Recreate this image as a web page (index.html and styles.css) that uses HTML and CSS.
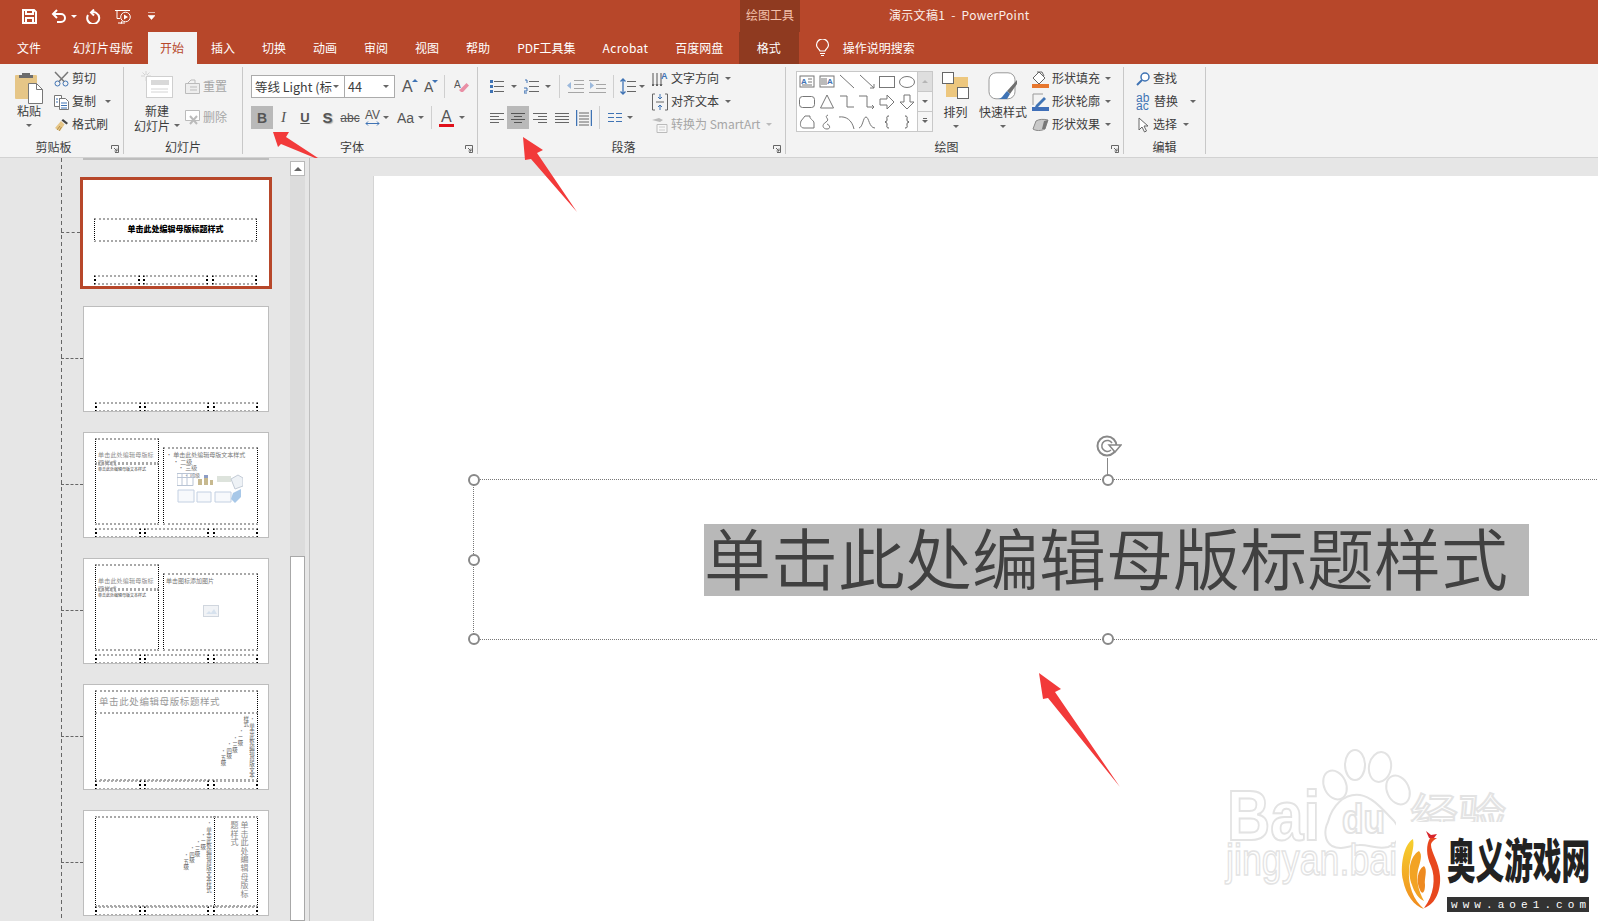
FILE: index.html
```html
<!DOCTYPE html>
<html lang="zh-CN">
<head>
<meta charset="utf-8">
<title>演示文稿1 - PowerPoint</title>
<link rel="stylesheet" href="styles.css">
</head>
<body>
<svg class="defs" width="0" height="0">
  <symbol id="launcher" viewBox="0 0 8 8"><path d="M.5 4V.5h7v7H4M3 3l3 3M6 3.500V6H3.500" fill="none" stroke="#666"/></symbol>
  <symbol id="a-left" viewBox="0 0 14 12"><path d="M0 1.500h14M0 4.500h9M0 7.500h14M0 10.500h9" fill="none" stroke="#666"/></symbol>
  <symbol id="a-center" viewBox="0 0 14 12"><path d="M0 1.500h14M3 4.500h8M0 7.500h14M3 10.500h8" fill="none" stroke="#555"/></symbol>
  <symbol id="a-right" viewBox="0 0 14 12"><path d="M0 1.500h14M5 4.500h9M0 7.500h14M5 10.500h9" fill="none" stroke="#666"/></symbol>
  <symbol id="a-just" viewBox="0 0 14 12"><path d="M0 1.500h14M0 4.500h14M0 7.500h14M0 10.500h14" fill="none" stroke="#666"/></symbol>
</svg>

<header class="titlebar">
  <div class="qat">
    <svg class="q-save" width="15" height="15" viewBox="0 0 15 15"><path d="M1 1h11l2 2v11H1zM4 1v4h7V1M4 14V9h7v5" fill="none" stroke="#fff" stroke-width="2"/></svg>
    <svg class="q-undo" width="16" height="14" viewBox="0 0 16 14"><path d="M2 5h8a3.600 3.600 0 0 1 0 8H6M6 1 2 5l4 4" fill="none" stroke="#fff" stroke-width="2"/></svg>
    <i class="caret white"></i>
    <svg class="q-redo" width="15" height="15" viewBox="0 0 15 15"><path d="M5 3.500a6 6 0 1 1-3 2.600M8 .5 5 3.500l3 3" fill="none" stroke="#fff" stroke-width="2"/></svg>
    <svg class="q-show" width="17" height="17" viewBox="0 0 17 17"><path d="M0 1.500h15M2 1.500v8h3M3 14h7" fill="none" stroke="#fff"/><circle cx="10.500" cy="8" r="4.800" fill="none" stroke="#fff"/><path d="M9 5.500l4 2.500-4 2.500z" fill="#fff"/><path d="M6 15l1-3" stroke="#fff"/></svg>
    <svg class="q-more" width="7" height="8" viewBox="0 0 7 8"><path d="M0 .5h7M0 3.500h7L3.500 7.500z" fill="#fff" stroke="#fff" stroke-width=".6"/></svg>
  </div>
  <div class="ctx-head">绘图工具</div>
  <div class="doc-title">演示文稿1&nbsp; - &nbsp;PowerPoint</div>
</header>

<nav class="tabs">
  <a class="tab first">文件</a><a class="tab">幻灯片母版</a><a class="tab on">开始</a><a class="tab">插入</a><a class="tab">切换</a><a class="tab">动画</a><a class="tab">审阅</a><a class="tab">视图</a><a class="tab">帮助</a><a class="tab">PDF工具集</a><a class="tab wide">Acrobat</a><a class="tab">百度网盘</a><a class="tab ctx">格式</a>
  <svg class="bulb" width="15" height="18" viewBox="0 0 15 18"><path d="M5 12C4 9.500 1.500 9 1.500 6a6 6 0 0 1 12 0c0 3-2.500 3.500-3.500 6zM5 14.500h5M6 16.500h3" fill="none" stroke="#fff" stroke-width="1.200"/></svg>
  <a class="search">操作说明搜索</a>
</nav>

<section class="ribbon">
  <!-- 剪贴板 -->
  <div class="group g1">
    <div class="body">
      <div class="big paste">
        <svg width="30" height="33" viewBox="0 0 30 33"><rect x="1" y="4" width="22" height="24" rx="1" fill="#e6c687"/><path d="M8 4V2h8v2h3v3H5V4z" fill="#6d6d6d"/><path d="M14.500 12.500h8l6 6v14h-14z" fill="#fff" stroke="#777"/><path d="M22.500 12.500v6h6" fill="none" stroke="#777"/></svg>
        <span>粘贴</span><i class="caret lone"></i>
      </div>
      <div class="col">
        <div class="row"><svg class="ri" width="15" height="16" viewBox="0 0 15 16"><circle cx="3.500" cy="12.500" r="2.500" fill="none" stroke="#3f73b4"/><circle cx="11.500" cy="12.500" r="2.500" fill="none" stroke="#3f73b4"/><path d="M1 1l9 9.500M14 1 5 10.500" stroke="#777" stroke-width="1.500"/></svg>剪切</div>
        <div class="row"><svg class="ri" width="15" height="16" viewBox="0 0 15 16"><path d="M.5 1.500h7v3h-2v8h-5zM5.500 4.500h6l3 3v8h-9z" fill="#fff" stroke="#777"/><path d="M2 5h2M2 8h2M7 9h6M7 11.500h6M7 14h6" stroke="#3f73b4"/></svg>复制<i class="caret m9"></i></div>
        <div class="row"><svg class="ri" width="15" height="16" viewBox="0 0 15 16"><path d="M9 2l5 4-1.500 1.500-5-4z" fill="#444"/><path d="M7 4l3.500 3.500L6 14 1 11z" fill="#e6c687"/><path d="M3 13l3-4M5 14l2.500-4" stroke="#b58f4a"/></svg>格式刷</div>
      </div>
    </div>
    <div class="label launch">剪贴板<svg class="lnch" width="8" height="8"><use href="#launcher"/></svg></div>
  </div>

  <!-- 幻灯片 -->
  <div class="group g2">
    <div class="body">
      <div class="big newslide">
        <svg width="32" height="27" viewBox="0 0 32 27"><rect x="5.500" y="5.500" width="26" height="21" fill="#fff" stroke="#cfcfcf"/><rect x="10" y="9" width="18" height="5" fill="#d9d9d9"/><path d="M10 18h17M10 21h17" stroke="#d4d4d4"/><path d="M5 0v4M0 5h4M5 6v4M6 5h4M1.500 1.500 4 4M8.500 1.500 6 4" stroke="#d4d4d4"/></svg>
        <span>新建</span><span class="cap-row">幻灯片<i class="caret m4"></i></span>
      </div>
      <div class="col spaced dim">
        <div class="row"><svg class="ri" width="15" height="15" viewBox="0 0 15 15"><path d="M.5 4.500h14v10H.5z" fill="#eee" stroke="#bbb"/><path d="M3 4l3-3h4v3M5 8h7M5 11h7" fill="none" stroke="#bbb"/></svg>重置</div>
        <div class="row"><svg class="ri" width="15" height="15" viewBox="0 0 15 15"><path d="M.5.500h14v10H.5z" fill="#fff" stroke="#bbb"/><path d="M5 6l7 8M12 6l-7 8" stroke="#bbb" stroke-width="2"/></svg>删除</div>
      </div>
    </div>
    <div class="label">幻灯片</div>
  </div>

  <!-- 字体 -->
  <div class="group g3">
    <div class="body stack">
      <div class="tight">
        <div class="field f-font"><span>等线 Light (标</span><i class="caret"></i></div>
        <div class="field f-size"><span>44</span><i class="caret"></i></div>
        <span class="grow">A<i class="tri up"></i></span>
        <span class="grow small">A<i class="tri down"></i></span>
        <i class="vsep s-font"></i>
        <svg class="eraser" width="15" height="16" viewBox="0 0 15 16"><path d="M6.500 10l6-6 2.500 2.500-6 6.500H7L5 11z" fill="#e98fa5"/><text x="0" y="9" class="tiny">A</text></svg>
      </div>
      <div class="tight">
        <b class="fb fb-b on-box">B</b><i class="fb fb-i">I</i><u class="fb fb-u">U</u><b class="fb fb-s">S</b><s class="fb fb-abc">abc</s>
        <span class="fb fb-av"><span class="av">AV<svg width="15" height="5" viewBox="0 0 15 5"><path d="M1 2.500h13M3 .5l-2 2 2 2M12 .5l2 2-2 2" fill="none" stroke="#3f73b4"/></svg></span><i class="caret"></i></span>
        <span class="fb fb-aa">Aa<i class="caret"></i></span>
        <i class="vsep s-color"></i>
        <span class="fb fb-color"><span class="colorA">A</span><i class="caret"></i></span>
      </div>
    </div>
    <div class="label launch">字体<svg class="lnch" width="8" height="8"><use href="#launcher"/></svg></div>
  </div>

  <!-- 段落 -->
  <div class="group g4">
    <div class="body">
      <div class="stack para">
        <div class="tight">
          <svg width="15" height="15" viewBox="0 0 15 15"><path d="M5 2.500h10M5 7.500h10M5 12.500h10" stroke="#666"/><path d="M1 1h3v3H1zM1 6h3v3H1zM1 11h3v3H1z" fill="#3f73b4"/></svg><i class="caret m7"></i>
          <svg class="m7" width="15" height="15" viewBox="0 0 15 15"><path d="M5 2.500h10M5 7.500h10M5 12.500h10" stroke="#666"/><path d="M1 1h2v3M0 9h3v3H0v2h3" fill="none" stroke="#3f73b4"/></svg><i class="caret m6"></i>
          <i class="vsep m8"></i>
          <svg class="m7 faint" width="17" height="13" viewBox="0 0 17 13"><path d="M7 .5h10M7 4.500h10M7 8.500h10M1 12.500h16" stroke="#999"/><path d="M0 5.500 4 2v7z" fill="#8eb0d8"/></svg>
          <svg class="m5 faint" width="17" height="13" viewBox="0 0 17 13"><path d="M0 .5h10M7 4.500h10M7 8.500h10M0 12.500h17" stroke="#999"/><path d="M5 5.500 1 2v7z" fill="#8eb0d8"/></svg>
          <i class="vsep m7"></i>
          <svg class="m6" width="16" height="17" viewBox="0 0 16 17"><path d="M7 3.500h9M7 8.500h9M7 13.500h9" stroke="#666"/><path d="M3 1v15M.5 3.500 3 1l2.500 2.500M.5 13.500 3 16l2.500-2.500" fill="none" stroke="#3f73b4" stroke-width="1.300"/></svg><i class="caret m3"></i>
        </div>
        <div class="tight">
          <span class="al first-al"><svg width="14" height="12"><use href="#a-left"/></svg></span>
          <span class="al al-on"><svg width="14" height="12"><use href="#a-center"/></svg></span>
          <span class="al"><svg width="14" height="12"><use href="#a-right"/></svg></span>
          <span class="al m8"><svg width="14" height="12"><use href="#a-just"/></svg></span>
          <svg class="m7" width="16" height="16" viewBox="0 0 16 16"><path d="M.5 0v16M15.500 0v16" stroke="#3f73b4" stroke-width="1.500"/><path d="M3 3h10M3 6h10M3 9h10M3 12h10M3 15h10" stroke="#666"/></svg>
          <i class="vsep m7"></i>
          <svg class="m8" width="14" height="12" viewBox="0 0 14 12"><path d="M0 1.500h6M8 1.500h6M0 5.500h6M8 5.500h6M0 9.500h6M8 9.500h6" stroke="#3f73b4" stroke-width="1.200"/></svg><i class="caret m5"></i>
        </div>
      </div>
      <div class="col textcol">
        <div class="row"><svg class="ri tall" width="16" height="18" viewBox="0 0 16 18"><path d="M1 3v13M5 3v13M9 3v13" stroke="#555"/><text x="9" y="9" class="blueA">A</text><path d="M0 14l1 2 1-2M4 14l1 2 1-2M8 14l1 2 1-2" fill="none" stroke="#555"/></svg>文字方向<i class="caret m6"></i></div>
        <div class="row"><svg class="ri tall" width="16" height="18" viewBox="0 0 16 18"><path d="M3 1H.5v16H3M13 1h2.500v16H13" fill="none" stroke="#666"/><path d="M4 9h8" stroke="#666"/><path d="M8 1v5M6 4l2 2 2-2M8 17v-5M6 14l2-2 2 2" fill="none" stroke="#3f73b4"/></svg>对齐文本<i class="caret m6"></i></div>
        <div class="row dim"><svg class="ri tall" width="16" height="18" viewBox="0 0 16 18"><path d="M0 4l7-2 4 2-3 2z" fill="#bbb"/><path d="M5 8.500h10v8H5z" fill="#f7f7f7" stroke="#bbb"/><path d="M7 11h6M7 14h6" stroke="#ccc"/></svg>转换为 SmartArt<i class="caret m6 pale"></i></div>
      </div>
    </div>
    <div class="label launch">段落<svg class="lnch" width="8" height="8"><use href="#launcher"/></svg></div>
  </div>

  <!-- 绘图 -->
  <div class="group g5">
    <div class="body">
      <div class="gallery">
        <div class="shapes">
          <svg viewBox="0 0 20 20"><rect x="3" y="4" width="14" height="11" fill="#fff" stroke="#777"/><text x="4" y="12" class="tinyblue">A</text><path d="M11 7h4M11 10h4M5 13h10" stroke="#777"/></svg>
          <svg viewBox="0 0 20 20"><rect x="3" y="4" width="14" height="11" fill="#fff" stroke="#777"/><path d="M5 6v7M7 6v7M9 6v7" stroke="#777"/><text x="10" y="12" class="tinyblue">A</text></svg>
          <svg viewBox="0 0 20 20"><path d="M3 3l14 13" stroke="#777"/></svg>
          <svg viewBox="0 0 20 20"><path d="M3 3l14 13M17 12v4h-4" fill="none" stroke="#777"/></svg>
          <svg viewBox="0 0 20 20"><rect x="2.500" y="4.500" width="15" height="11" fill="none" stroke="#777"/></svg>
          <svg viewBox="0 0 20 20"><ellipse cx="10" cy="10" rx="7.500" ry="5.500" fill="none" stroke="#777"/></svg>
          <svg viewBox="0 0 20 20"><rect x="2.500" y="4.500" width="15" height="11" rx="3" fill="none" stroke="#777"/></svg>
          <svg viewBox="0 0 20 20"><path d="M10 3l6.500 13h-13z" fill="none" stroke="#777"/></svg>
          <svg viewBox="0 0 20 20"><path d="M3 4h7v11h7" fill="none" stroke="#777"/></svg>
          <svg viewBox="0 0 20 20"><path d="M2 4h8v11h7M15 13l2 2-2 2" fill="none" stroke="#777"/></svg>
          <svg viewBox="0 0 20 20"><path d="M3 7h7V3l7 7-7 7v-4H3z" fill="none" stroke="#777"/></svg>
          <svg viewBox="0 0 20 20"><path d="M7 3h6v7h4l-7 7-7-7h4z" fill="none" stroke="#777"/></svg>
          <svg viewBox="0 0 20 20"><path d="M4 9l4-5h5c-1 3 4 4 4 7v5H7C3 16 3 12 4 9z" fill="none" stroke="#777"/></svg>
          <svg viewBox="0 0 20 20"><path d="M11 3C6 5 14 7 9 10S6 17 10 17s3-4 0-5" fill="none" stroke="#777"/></svg>
          <svg viewBox="0 0 20 20"><path d="M2 5c7-1 13 3 15 12" fill="none" stroke="#777"/></svg>
          <svg viewBox="0 0 20 20"><path d="M2 16C6 15 6 5 9 5s3 11 9 11" fill="none" stroke="#777"/></svg>
          <svg viewBox="0 0 20 20"><path d="M12 4c-3 0-2 2-2 3s0 3-2 3c2 0 2 2 2 3s-1 3 2 3" fill="none" stroke="#555"/></svg>
          <svg viewBox="0 0 20 20"><path d="M8 4c3 0 2 2 2 3s0 3 2 3c-2 0-2 2-2 3s1 3-2 3" fill="none" stroke="#555"/></svg>
        </div>
        <div class="g-scroll">
          <span class="gs off"><i class="tri up grey"></i></span>
          <span class="gs"><i class="caret"></i></span>
          <span class="gs more"><i class="caret"></i></span>
        </div>
      </div>
      <div class="big arrange">
        <svg width="27" height="27" viewBox="0 0 27 27"><rect x="10" y="5" width="16" height="10" fill="#edc77e"/><rect x="4" y="12" width="13" height="13" fill="#edc77e"/><rect x=".5" y=".5" width="11" height="11" fill="#fff" stroke="#666"/><rect x="15.500" y="15.500" width="11" height="11" fill="#fff" stroke="#666"/></svg>
        <span>排列</span><i class="caret lone"></i>
      </div>
      <div class="big quick">
        <svg width="30" height="28" viewBox="0 0 30 28"><rect x="1" y=".8" width="26" height="26" rx="7" fill="#fff" stroke="#999"/><path d="M29 8 19 19l3 3 7-10z" fill="#6f6f6f"/><path d="M10 27c4 0 5-4 9-8l3 3-3 5z" fill="#3f73b4"/></svg>
        <span>快速样式</span><i class="caret lone"></i>
      </div>
      <div class="col shapecol">
        <div class="row"><svg class="ri tall" width="17" height="18" viewBox="0 0 17 18"><path d="M7 2 1 8l6 6 6-6z" fill="#fff" stroke="#666"/><path d="M5 2h5l2 4" fill="none" stroke="#666"/><rect y="14" width="17" height="4" fill="#e7772e"/></svg>形状填充<i class="caret m5"></i></div>
        <div class="row"><svg class="ri tall" width="17" height="18" viewBox="0 0 17 18"><path d="M1 12V1h10" fill="none" stroke="#999"/><path d="M4 12l8-8 2 2-8 8H3z" fill="#3f73b4"/><rect y="14" width="17" height="4" fill="#3f6fb8"/></svg>形状轮廓<i class="caret m5"></i></div>
        <div class="row"><svg class="ri tall" width="17" height="18" viewBox="0 0 17 18"><path d="M1 13 4 5c3-2 8-2 12-1l-3 9c-4 2-9 2-12 0z" fill="#c9c9c9" stroke="#888"/><path d="M13 13l3-9-4 1-2 8z" fill="#777"/></svg>形状效果<i class="caret m5"></i></div>
      </div>
    </div>
    <div class="label launch">绘图<svg class="lnch" width="8" height="8"><use href="#launcher"/></svg></div>
  </div>

  <!-- 编辑 -->
  <div class="group g6">
    <div class="body">
      <div class="col">
        <div class="row"><svg class="ri" width="14" height="14" viewBox="0 0 14 14"><circle cx="9" cy="5" r="4" fill="#fff" stroke="#3f73b4" stroke-width="1.500"/><path d="M6 8l-5 5" stroke="#3f73b4" stroke-width="2"/></svg>查找</div>
        <div class="row"><span class="abac ri">ab<br>ac</span>替换<i class="caret m12"></i></div>
        <div class="row"><svg class="ri" width="14" height="16" viewBox="0 0 14 16"><path d="M3 1v12l3-3 2.500 5 2-1-2.500-5h4z" fill="#fff" stroke="#666"/></svg>选择<i class="caret m6"></i></div>
      </div>
    </div>
    <div class="label">编辑</div>
  </div>
</section>

<main class="workspace">
  <aside class="pane">
    <div class="tree">
      <div class="prev"></div>

      <div class="t-row"><div class="thumb sel">
        <div class="ph t-title"><b>单击此处编辑母版标题样式</b></div>
        <div class="ph f1"></div><div class="ph f2"></div><div class="ph f3"></div>
      </div></div>

      <div class="t-row"><div class="thumb">
        <div class="ph f1"></div><div class="ph f2"></div><div class="ph f3"></div>
      </div></div>

      <div class="t-row"><div class="thumb">
        <div class="ph s-title">单击此处编辑母版标题样式</div>
        <div class="ph s-text"><p>单击此处编辑母版文本样式</p></div>
        <div class="ph s-right">
          <p>• 单击此处编辑母版文本样式</p><p class="l2">• 二级</p><p class="l3">• 三级</p><p class="l4">• 四级</p>
          <svg class="content-icons" width="66" height="32" viewBox="0 0 66 32">
            <path d="M0 .5h16v12H0zM0 4.500h16M5 .5v12M10 .5v12" fill="none" stroke="#b9c4d4"/>
            <path d="M21 12V6h4v6zM27 12V2h4v10zM33 12V7h3v5z" fill="#c7b98f"/><path d="M27 5h4V2h-4z" fill="#8c9cc4"/>
            <path d="M40 3h14v6H40z" fill="#dde3dc"/>
            <path d="M54 6l7-4 5 3v8l-8 3z" fill="#eef2f6" stroke="#c3cbd6"/>
            <path d="M1 17h16v12H1zM20 19h14v10H20zM38 19h16v10H38z" fill="#f7f9fc" stroke="#c3d0e2"/>
            <path d="M56 20l8-4v8l-6 6-4-4z" fill="#a8c8e8"/>
          </svg>
        </div>
        <div class="ph f1"></div><div class="ph f2"></div><div class="ph f3"></div>
      </div></div>

      <div class="t-row"><div class="thumb">
        <div class="ph s-title">单击此处编辑母版标题样式</div>
        <div class="ph s-text"><p>单击此处编辑母版文本样式</p></div>
        <div class="ph s-right">
          <p>单击图标添加图片</p>
          <svg class="pic-icon" width="16" height="12" viewBox="0 0 16 12"><rect x=".5" y=".5" width="15" height="11" fill="#f1f3f6" stroke="#d0d6de"/><path d="M3 9l3-3 2 2 3-4 3 5z" fill="#d7e2ee"/></svg>
        </div>
        <div class="ph f1"></div><div class="ph f2"></div><div class="ph f3"></div>
      </div></div>

      <div class="t-row"><div class="thumb">
        <div class="ph v-title">单击此处编辑母版标题样式</div>
        <div class="ph v-body vert">
          <p>• 单击此处编辑母版文本样式</p><p>• 二级</p><p>• 三级</p><p>• 四级</p><p>• 五级</p>
        </div>
        <div class="ph f1"></div><div class="ph f2"></div><div class="ph f3"></div>
      </div></div>

      <div class="t-row"><div class="thumb">
        <div class="ph w-body vert">
          <p>• 单击此处编辑母版文本样式</p><p>• 二级</p><p>• 三级</p><p>• 四级</p><p>• 五级</p>
        </div>
        <div class="ph w-title">单击此处编辑母版标题样式</div>
        <div class="ph f1"></div><div class="ph f2"></div><div class="ph f3"></div>
      </div></div>
    </div>

    <div class="scrollbar">
      <div class="sb-up"><i class="tri up dark"></i></div>
      <div class="sb-track"></div>
      <div class="sb-thumb"></div>
    </div>
  </aside>

  <div class="canvas">
    <div class="slide">
      <div class="placeholder">
        <span class="selected-text">单击此处编辑母版标题样式</span>
        <i class="handle h-tl"></i><i class="handle h-tc"></i><i class="handle h-ml"></i><i class="handle h-bl"></i><i class="handle h-bc"></i>
        <i class="rot-line"></i>
        <svg class="rot" width="26" height="24" viewBox="0 0 26 24"><circle cx="11" cy="12" r="9.500" fill="none" stroke="#888" stroke-width="2"/><path d="M15 16a5.500 5.500 0 1 1 1-7" fill="none" stroke="#888" stroke-width="1.500"/><path d="M13 11h12l-6 7z" fill="#fff" stroke="#888" stroke-width="1.500"/></svg>
      </div>

      <svg class="watermark" width="383" height="191" viewBox="1215 730 383 191">
        <g class="wm-outline">
          <ellipse cx="1335" cy="785" rx="11" ry="15" transform="rotate(-25 1335 785)"/>
          <ellipse cx="1355" cy="765" rx="10" ry="15"/>
          <ellipse cx="1380" cy="767" rx="11" ry="15" transform="rotate(10 1380 767)"/>
          <ellipse cx="1398" cy="790" rx="11" ry="15" transform="rotate(-25 1398 790)"/>
          <path d="M1328 822c4-16 16-29 32-27 13 2 23 15 34 26 8 10 7 21-6 26-12 3-20-3-29-2-9 0-17 6-27 1-8-5-8-16-4-24z"/>
          <text x="1227" y="840" textLength="93" lengthAdjust="spacingAndGlyphs" class="wm-big">Bai</text>
          <text x="1342" y="833" textLength="43" lengthAdjust="spacingAndGlyphs" class="wm-du">du</text>
          <text x="1410" y="832" textLength="96" lengthAdjust="spacingAndGlyphs" class="wm-cn">经验</text>
          <text x="1226" y="875" textLength="211" lengthAdjust="spacingAndGlyphs" class="wm-url">jingyan.baidu</text>
        </g>
        <rect x="1396" y="822" width="202" height="99" fill="#fff"/>
        <defs><linearGradient id="ph" x1="0" y1="0" x2="0" y2="1"><stop offset="0" stop-color="#f6d02e"/><stop offset="1" stop-color="#f08a1e"/></linearGradient></defs>
        <path d="M1413 839c-10 6-13 29-10 41 3 15 11 26 21 29-11-9-16-24-15-39 1-13 6-22 4-31z" fill="url(#ph)"/>
        <path d="M1419 851c-9 5-12 21-7 34 2 7 7 14 12 16-6-11-8-21-6-31 2-8 5-15 1-19z" fill="#f2a324"/>
        <path d="M1424 866c-7 4-8 16-4 24 2 5 5 3 5-5-1-7 3-15-1-19z" fill="#ee8a20"/>
        <path d="M1430 838c-4 7-4 17 1 28 5 12 3 29-7 42 12-4 17-18 16-32-1-14-9-24-9-31 0-3 3-5 6-7z" fill="#e8481e"/>
        <path d="M1426 831l5 4 6-1-3 4h-5z" fill="#d8262c"/>
        <text transform="translate(1447 878) scale(1 1.620)" textLength="143" lengthAdjust="spacingAndGlyphs" class="logo-cn">奥义游戏网</text>
        <rect x="1447" y="897" width="142" height="15" fill="#333"/>
        <text x="1451" y="908" textLength="135" class="logo-url">www.aoe1.com</text>
      </svg>
    </div>
  </div>
</main>

<svg class="arrows" width="1598" height="921" viewBox="0 0 1598 921">
  <path d="M273 132l16 0-3 5 32 21h-3l-34-14-3 3z" fill="#f23a3a"/>
  <path d="M523 137l20 13-6 3 40 59-46-53-6 1z" fill="#f23a3a"/>
  <path d="M1039 673l22 16-6 3 65 95-72-89-5 1z" fill="#f23a3a"/>
</svg>
</body>
</html>
```

FILE: styles.css
```css
* { box-sizing: border-box; }
html, body { margin: 0; height: 100%; }
body {
  width: 1598px; height: 921px; overflow: hidden; position: relative;
  font: 12px/1.2 "Noto Sans CJK SC", "Noto Sans", sans-serif;
  color: #3c3c3c; background: #e6e6e6;
  display: flex; flex-direction: column;
}
.defs { position: absolute; }
p { margin: 0; }
svg { flex: none; display: block; }

/* title bar */
.titlebar { height: 32px; background: #b7472a; display: flex; color: #fff; flex: none; }
.qat { display: flex; align-items: center; width: 740px; padding-left: 22px; }
.q-save { margin-top: 1px; }
.q-undo { margin-left: 14px; }
.qat .caret { margin-left: 4px; }
.q-redo { margin-left: 9px; }
.q-show { margin-left: 14px; margin-top: 2px; }
.q-more { margin-left: 16px; }
.ctx-head { width: 60px; background: #8f3a20; color: #f3c2ad; text-align: center; line-height: 29px; }
.doc-title { margin-left: 89px; line-height: 29px; color: #fbeee9; letter-spacing: .3px; }

/* tabs */
.tabs { height: 32px; background: #b7472a; display: flex; align-items: stretch; padding-left: 4.500px; gap: 2px; flex: none; }
.tab { padding: 0 12.500px; color: #fff; line-height: 31px; }
.tab.first { margin-right: 5px; }
.tab.wide { letter-spacing: .3px; }
.tab.on { background: #f3f3f3; color: #b7472a; width: 49px; padding: 0; text-align: center; }
.tab.ctx { background: #8f3a20; width: 60px; padding: 0; text-align: center; margin-left: 1px; }
.bulb { align-self: center; margin-left: 14px; margin-top: -1px; }
.search { color: #fff; line-height: 31px; margin-left: 11px; }

/* ribbon */
.ribbon { height: 94px; flex: none; background: #f3f3f3; border-bottom: 1px solid #d2d2d2; display: flex; padding-top: 3px; align-items: flex-start; }
.group { height: 87px; border-right: 1px solid #c8c8c8; position: relative; display: flex; flex-direction: column; }
.g1 { width: 124px; } .g2 { width: 119px; } .g3 { width: 235px; }
.g4 { width: 308px; } .g5 { width: 338px; } .g6 { width: 82px; }
.body { height: 73px; display: flex; flex: none; }
.label { height: 14px; line-height: 14px; text-align: center; }
.label.launch { padding-right: 16px; }
.lnch { position: absolute; right: 4px; bottom: 1px; }

.big { display: flex; flex-direction: column; align-items: center; line-height: 15px; }
.big .lone { margin-top: 6px; }
.paste { width: 46px; margin-left: 6px; padding-top: 4px; }
.paste span { margin-top: -1px; }
.g1 .col { margin-left: 2px; }
.col { display: flex; flex-direction: column; }
.row { height: 23px; display: flex; align-items: center; white-space: nowrap; }
.ri { margin-right: 3px; }
.newslide { width: 56px; margin-left: 5px; padding-top: 4px; }
.newslide svg { margin-bottom: 5px; }
.cap-row { display: flex; align-items: center; }
.col.spaced { padding-top: 8px; gap: 8px; }
.dim { color: #a6a6a6; }

/* small icon caret */
.caret { width: 0; height: 0; border: 3px solid transparent; border-top-color: #666; border-bottom: 0; display: inline-block; flex: none; }
.caret.white { border-top-color: #fff; }
.caret.pale { border-top-color: #bbb; }
.m3 { margin-left: 3px; } .m4 { margin-left: 4px; } .m5 { margin-left: 5px; } .m6 { margin-left: 6px; }
.m7 { margin-left: 7px; } .m8 { margin-left: 8px; } .m9 { margin-left: 9px; } .m12 { margin-left: 12px; }
.tri { display: inline-block; width: 0; height: 0; border: 3px solid transparent; border-top: 0; border-bottom: 3px solid #3f73b4; }
.tri.down { border-bottom: 0; border-top: 3px solid #3f73b4; }
.tri.grey { border-bottom-color: #b5b5b5; }
.tri.dark { border: 4px solid transparent; border-top: 0; border-bottom: 4px solid #666; }

/* font group */
.stack { padding-top: 8px; display: flex; flex-direction: column; gap: 8px; }
.g3 .body { padding-left: 8px; }
.tight { display: flex; align-items: center; height: 23px; }
.field { height: 23px; border: 1px solid #ababab; background: #fff; display: flex; align-items: center; justify-content: space-between; padding: 0 5px 0 3px; font-size: 12.500px; white-space: nowrap; flex: none; }
.f-font { width: 94px; }
.f-size { width: 51px; margin-left: -1px; }
.grow { font: 16px "Liberation Sans", sans-serif; color: #555; display: flex; margin-left: 7px; width: 14px; align-items: flex-start; }
.grow.small { font-size: 14px; margin-left: 8px; align-self: flex-end; margin-bottom: 3px; }
.grow .tri { margin-top: 1px; flex: none; margin-left: -1px; }
.vsep { width: 1px; height: 23px; background: #cfcfcf; flex: none; display: block; }
.s-font { margin-left: 6px; }
.eraser { margin-left: 9px; }
.tiny { font: 10px "Liberation Sans", sans-serif; fill: #555; }
.fb { height: 23px; display: flex; align-items: center; justify-content: center; font: 14px "Liberation Sans", sans-serif; color: #555; flex: none; }
.fb-b { width: 22px; font-weight: bold; }
.on-box { background: #b9b9b9; }
.fb-i { width: 21px; font-family: "Liberation Serif", serif; font-size: 15px; font-style: italic; }
.fb-u { width: 22px; font-weight: bold; font-size: 13px; }
.fb-s { width: 23px; font-size: 15px; font-weight: bold; text-shadow: 1px 1px 1px #aaa; }
.fb-abc { width: 22px; font-size: 12px; }
.fb-av { width: 31px; font-size: 12px; justify-content: flex-start; padding-left: 4px; gap: 3px; }
.av { display: flex; flex-direction: column; line-height: 11px; }
.fb-aa { width: 33px; gap: 4px; justify-content: flex-start; padding-left: 5px; }
.s-color { margin-left: 6px; }
.fb-color { width: 34px; gap: 5px; justify-content: flex-start; padding-left: 7px; }
.colorA { font-size: 16px; line-height: 15px; border-bottom: 3px solid #e0101a; padding: 0 2px; color: #555; }

/* paragraph group */
.para { padding-left: 11px; width: 174px; }
.al { display: flex; margin-left: 8px; }
.first-al { margin-left: 1px; margin-right: 3px; }
.al-on { background: #b9b9b9; width: 22px; height: 23px; margin-left: 0; margin-right: 4px; justify-content: center; align-items: center; }
.al-on + .al { margin-left: 0; }
.blueA { font: bold 9px "Liberation Sans", sans-serif; fill: #3f73b4; }
.faint { opacity: .85; }

/* drawing group */
.gallery { margin: 4px 0 0 10px; width: 137px; height: 61px; border: 1px solid #c8c8c8; background: #fff; display: flex; flex: none; }
.shapes { width: 120px; display: grid; grid-template-columns: repeat(6, 20px); grid-auto-rows: 20px; }
.shapes svg { width: 20px; height: 20px; }
.tinyblue { font: bold 8px "Liberation Sans", sans-serif; fill: #3f73b4; }
.g-scroll { flex: 1; display: flex; flex-direction: column; border-left: 1px solid #c8c8c8; }
.gs { flex: 1; display: flex; align-items: center; justify-content: center; border-bottom: 1px solid #c8c8c8; background: #f6f6f6; }
.gs:last-child { border-bottom: 0; }
.gs.off { background: #dedede; }
.gs.more .caret { box-shadow: 0 -3px 0 -1px #666; }
.arrange { width: 43px; margin-left: 1px; padding-top: 5px; }
.arrange svg { margin-bottom: 5px; }
.arrange span, .quick span { line-height: 15px; }
.quick { width: 52px; padding-top: 5px; }
.quick svg { margin-bottom: 4px; }
.shapecol { margin-left: 3px; }
.g6 .body { padding-left: 12px; }
.abac { font: 12px/8px "Liberation Sans", sans-serif; color: #3f73b4; width: 15px; }

/* workspace */
.workspace { flex: 1; display: flex; min-height: 0; overflow: hidden; }
.pane { width: 310px; flex: none; display: flex; border-right: 1px solid #bfbfbf; }
.tree { width: 290px; flex: none; padding-left: 61px; overflow: hidden; background-image: linear-gradient(#666 55%, transparent 55%); background-size: 1px 7px; background-repeat: repeat-y; background-position: 61px 0; }
.prev { margin-left: 22px; width: 186px; height: 2px; background: #bdbdbd; margin-bottom: 20px; }
.t-row { display: flex; align-items: center; height: 106px; margin-bottom: 20px; }
.t-row::before { content: ""; width: 22px; border-top: 1px dashed #666; flex: none; margin-bottom: 2px; }
.thumb { width: 186px; height: 106px; background: #fff; border: 1px solid #bdbdbd; position: relative; font-size: 6px; color: #8c8c8c; overflow: hidden; }
.thumb.sel { border: 0; outline: 3px solid #b7472a; overflow: visible; }
.t-row:has(.sel)::before { width: 19px; margin-right: 3px; }
.ph { position: absolute; border-style: dotted; border-width: 2px 1px; border-color: #a8a8a8 #000; }
.f1, .f2, .f3 { top: 95px; height: 10px; border-color: #ababab #000; border-left-width: 2px; border-right-width: 2px; }
.f1 { left: 11px; width: 46px; } .f2 { left: 60px; width: 65px; } .f3 { left: 129px; width: 45px; }
.t-title { left: 11px; top: 38px; width: 163px; height: 24px; display: flex; align-items: center; justify-content: center; font-size: 8px; color: #000; }
.t-title b { font-family: "Liberation Serif", "Noto Sans CJK SC", serif; font-weight: 900; }
.s-title { left: 11px; top: 5px; width: 64px; height: 26px; padding: 11px 1px 0 2px; line-height: 7.500px; font-size: 6px; letter-spacing: .2px; }
.s-text { left: 11px; top: 30px; width: 64px; height: 62px; padding: 2px 2px; font-size: 4px; line-height: 4px; color: #444; }
.s-right { left: 79px; top: 14px; width: 95px; height: 78px; padding: 3px 0 0 2px; line-height: 6.500px; color: #777; }
.l2 { padding-left: 7px; } .l3 { padding-left: 12px; } .l4 { padding-left: 18px; font-size: 5px; }
.content-icons { position: absolute; left: 13px; top: 24px; }
.pic-icon { position: absolute; left: 39px; top: 30px; }
.v-title { left: 11px; top: 5px; width: 163px; height: 24px; padding-left: 3px; line-height: 18px; font-size: 9.500px; letter-spacing: .6px; color: #999; white-space: nowrap; }
.vert { writing-mode: vertical-rl; padding: 2px 3px 0 0; line-height: 5.700px; font-size: 5.500px; color: #666; white-space: normal; }
.v-body { left: 11px; top: 27px; width: 163px; height: 69px; }
.w-body { left: 11px; top: 5px; width: 120px; height: 91px; }
.vert p:nth-child(2) { padding-top: 12px; }
.vert p:nth-child(3) { padding-top: 19px; }
.vert p:nth-child(4) { padding-top: 25px; }
.vert p:nth-child(5) { padding-top: 32px; }
.w-title { left: 130px; top: 5px; width: 44px; height: 91px; writing-mode: vertical-rl; padding: 3px 8px 0 0; font-size: 8px; line-height: 10px; letter-spacing: .6px; color: #888; }

.scrollbar { width: 15px; flex: none; display: flex; flex-direction: column; padding-top: 3px; background: linear-gradient(#e6e6e6 3px, #dcdcdc 3px); }
.sb-up { height: 15px; background: #fff; border: 1px solid #b8b8b8; display: flex; align-items: center; justify-content: center; }
.sb-track { height: 380px; flex: none; }
.sb-thumb { flex: 1; background: #fff; border: 1px solid #a8a8a8; }

/* slide canvas */
.canvas { flex: 1; min-width: 0; padding: 18px 0 0 63px; display: flex; }
.slide { flex: 1; background: #fff; border-left: 1px solid #d4d4d4; position: relative; overflow: hidden; }
.placeholder { position: absolute; left: 99px; top: 303px; width: 1268px; height: 161px; border: 1px dotted #777; display: flex; align-items: center; padding-left: 230px; }
.selected-text { background: #b8b8b8; color: #404040; font-size: 67px; font-weight: 350; line-height: 64px; height: 72px; padding-right: 21px; white-space: nowrap; display: block; }
.handle { position: absolute; width: 12px; height: 12px; border: 2px solid #888; border-radius: 50%; background: #fff; }
.h-tl { left: -6px; top: -6px; } .h-tc { left: 628px; top: -6px; }
.h-ml { left: -6px; top: 74px; } .h-bl { left: -6px; bottom: -6px; } .h-bc { left: 628px; bottom: -6px; }
.rot-line { position: absolute; left: 633px; top: -22px; width: 1px; height: 17px; background: #888; }
.rot { position: absolute; left: 622px; top: -46px; }

.watermark { position: absolute; right: 0; bottom: 0; }
.wm-outline { fill: #fff; stroke: #e3e3e3; stroke-width: 2; }
.wm-outline text { font-family: "Liberation Sans", sans-serif; }
.wm-big { font-size: 70px; font-weight: bold; }
.wm-du { font-size: 40px; font-weight: bold; }
.wm-outline .wm-cn { font-size: 46px; font-family: "Noto Sans CJK SC", sans-serif; }
.wm-url { font-size: 44px; stroke-width: 1.500; }
.logo-cn { font: 900 29px "Noto Sans CJK SC", sans-serif; fill: #222; }
.logo-url { font: 11px "Liberation Mono", monospace; fill: #fff; }

.arrows { position: absolute; left: 0; top: 0; pointer-events: none; }
```
